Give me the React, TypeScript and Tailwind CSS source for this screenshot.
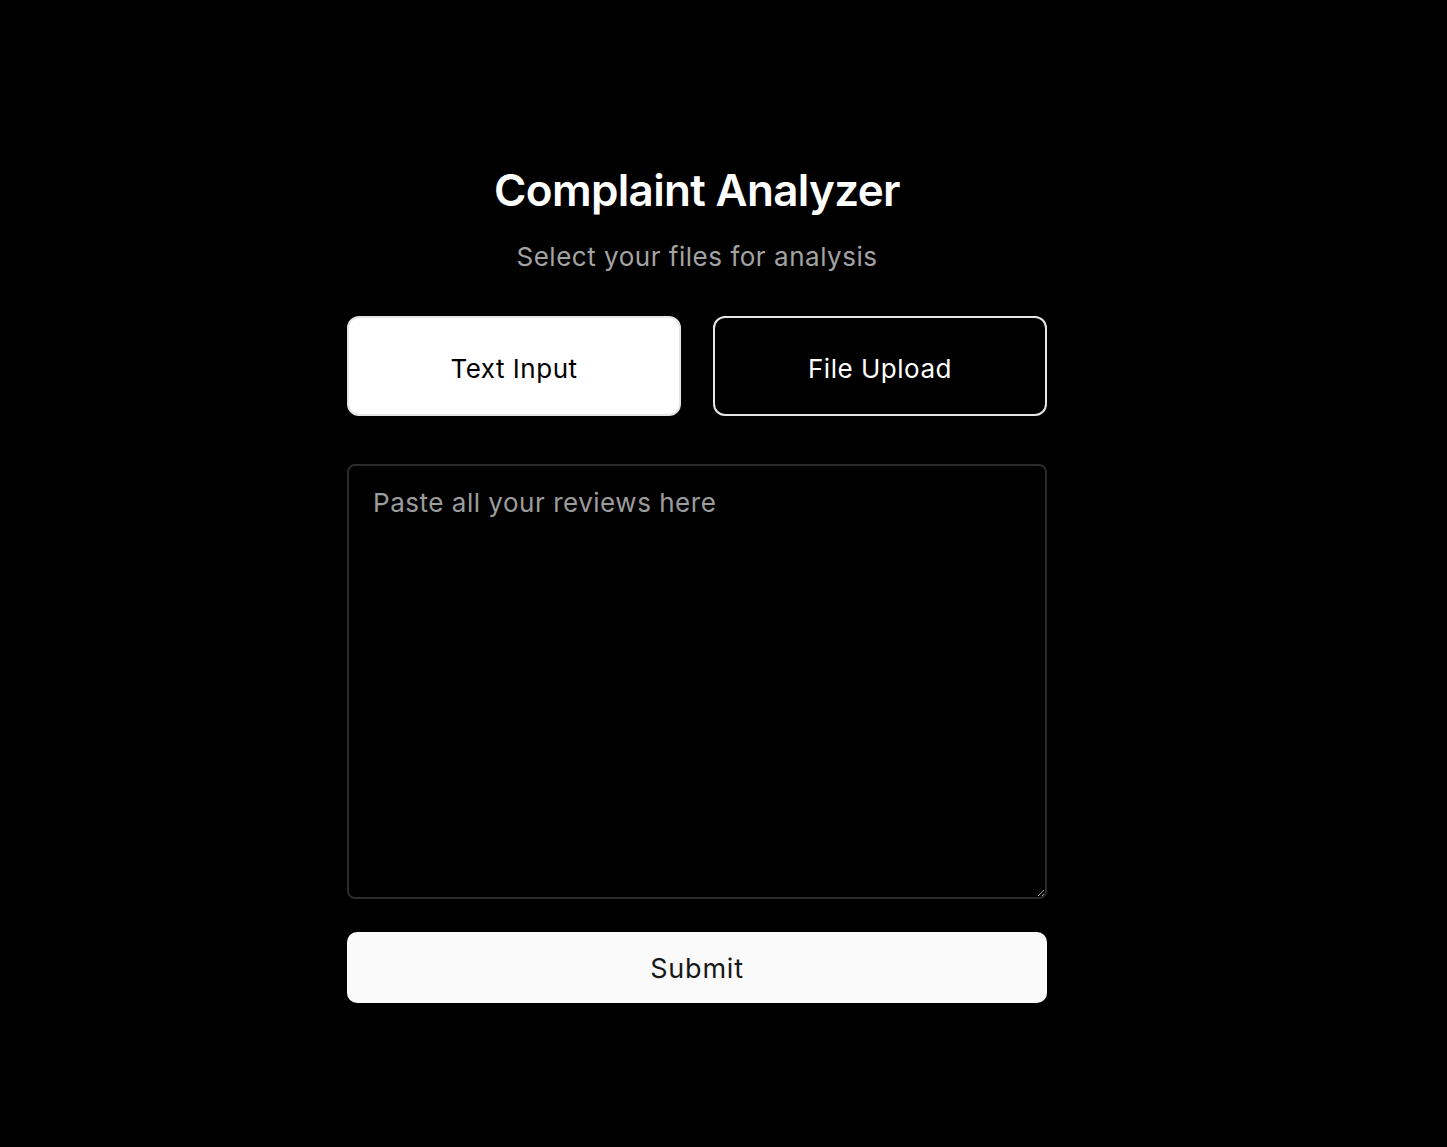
import React, { useState } from 'react';

export default function App() {
  const [mode, setMode] = useState<'text' | 'file'>('text');
  const [reviews, setReviews] = useState('');

  return (
    <div className="min-h-screen w-full bg-black text-white font-['Inter',sans-serif]">
      <div className="ml-[347px] w-[700px] pt-[164px] flex flex-col items-center">
        {/* Header */}
        <h1 className="text-[44px] leading-[53px] font-semibold tracking-[-0.015em] text-white">
          Complaint Analyzer
        </h1>
        <p className="mt-[24px] text-[26px] leading-[32px] tracking-[0.02em] text-[#a3a3a3]">
          Select your files for analysis
        </p>

        {/* Mode switch */}
        <div className="mt-[43px] w-full grid grid-cols-2 gap-8">
          <button
            onClick={() => setMode('text')}
            className={
              mode === 'text'
                ? 'h-[100px] pt-[5px] rounded-xl border-2 border-[#e5e5e5] bg-white text-[26px] tracking-[0.02em] text-black'
                : 'h-[100px] pt-[5px] rounded-xl border-2 border-[#e5e5e5] bg-black text-[26px] tracking-[0.02em] text-white'
            }
          >
            Text Input
          </button>
          <button
            onClick={() => setMode('file')}
            className={
              mode === 'file'
                ? 'h-[100px] pt-[5px] rounded-xl border-2 border-[#e5e5e5] bg-white text-[26px] tracking-[0.02em] text-black'
                : 'h-[100px] pt-[5px] rounded-xl border-2 border-[#e5e5e5] bg-black text-[26px] tracking-[0.02em] text-white'
            }
          >
            File Upload
          </button>
        </div>

        {/* Reviews */}
        <textarea
          value={reviews}
          onChange={(e) => setReviews(e.target.value)}
          placeholder="Paste all your reviews here"
          className="mt-[48px] w-full h-[435px] rounded-lg border-2 border-[#2b2b2b] bg-black px-[24px] pt-[19px] pb-[20px] text-[26px] leading-[36px] tracking-[0.02em] text-white placeholder:text-[#9c9c9c] outline-none"
        />

        <button className="mt-[33px] w-full h-[71px] pt-[4px] rounded-[10px] bg-[#fafafa] text-[27px] tracking-[0.03em] text-[#171717]">
          Submit
        </button>
      </div>
    </div>
  );
}
